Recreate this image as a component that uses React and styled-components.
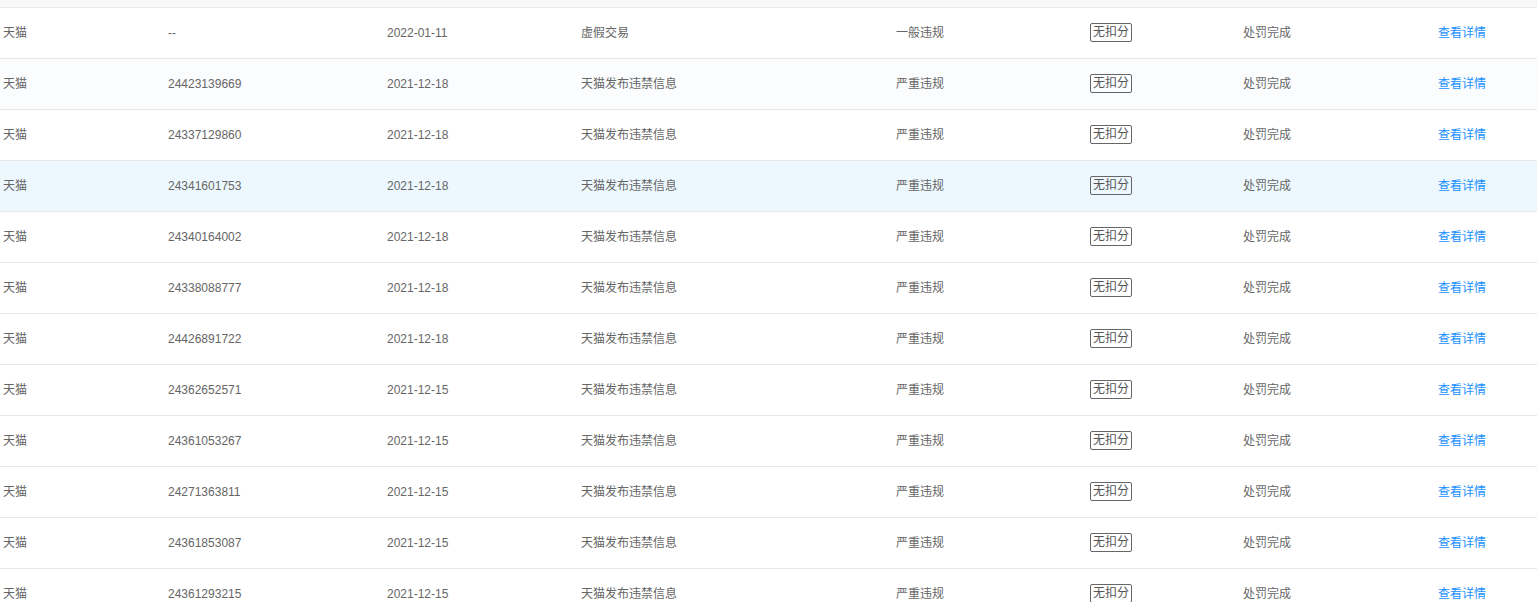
import React from "react";
import styled, { createGlobalStyle } from "styled-components";

const Global = createGlobalStyle`
  html, body { margin: 0; padding: 0; background: #fff; }
  body { font-family: "Liberation Sans", "Noto Sans CJK SC", sans-serif; overflow: hidden; }
`;

const Table = styled.div`
  width: 1537px;
  display: flex;
  flex-direction: column;
`;

const HeaderStrip = styled.div`
  height: 7px;
  background: #f8f8f8;
`;

const Row = styled.div`
  display: grid;
  grid-template-columns: 165px 219px 194px 315px 194px 153px 195px 102px;
  height: 50px;
  border-top: 1px solid #e8e8e8;
  background: ${(p) => (p.$tone === "hover" ? "#edf8fe" : p.$tone === "soft" ? "#fbfcfd" : "#fff")};
  flex-shrink: 0;
`;

const Cell = styled.div`
  display: flex;
  align-items: center;
  padding-left: 3px;
  padding-bottom: 1px;
  font-size: 12px;
  line-height: 16px;
  color: #666;
  white-space: nowrap;
`;

const Tag = styled.span`
  display: inline-flex;
  align-items: center;
  height: 17px;
  padding: 0 2px;
  border: 1px solid #666;
  border-radius: 2px;
  color: #555;
  font-size: 12px;
  line-height: 17px;
`;

const Link = styled.a`
  color: #1890ff;
  font-size: 12px;
  text-decoration: none;
  cursor: pointer;
`;

const rows = [
  ["--", "2022-01-11", "虚假交易", "一般违规"],
  ["24423139669", "2021-12-18", "天猫发布违禁信息", "严重违规", "soft"],
  ["24337129860", "2021-12-18", "天猫发布违禁信息", "严重违规"],
  ["24341601753", "2021-12-18", "天猫发布违禁信息", "严重违规", "hover"],
  ["24340164002", "2021-12-18", "天猫发布违禁信息", "严重违规"],
  ["24338088777", "2021-12-18", "天猫发布违禁信息", "严重违规"],
  ["24426891722", "2021-12-18", "天猫发布违禁信息", "严重违规"],
  ["24362652571", "2021-12-15", "天猫发布违禁信息", "严重违规"],
  ["24361053267", "2021-12-15", "天猫发布违禁信息", "严重违规"],
  ["24271363811", "2021-12-15", "天猫发布违禁信息", "严重违规"],
  ["24361853087", "2021-12-15", "天猫发布违禁信息", "严重违规"],
  ["24361293215", "2021-12-15", "天猫发布违禁信息", "严重违规"],
];

export default function App() {
  return (
    <>
      <Global />
      <Table>
        <HeaderStrip />
        {rows.map(([id, date, reason, level, tone], i) => (
          <Row key={i} $tone={tone}>
            <Cell>天猫</Cell>
            <Cell>{id}</Cell>
            <Cell>{date}</Cell>
            <Cell>{reason}</Cell>
            <Cell>{level}</Cell>
            <Cell>
              <Tag>无扣分</Tag>
            </Cell>
            <Cell>处罚完成</Cell>
            <Cell>
              <Link>查看详情</Link>
            </Cell>
          </Row>
        ))}
      </Table>
    </>
  );
}
